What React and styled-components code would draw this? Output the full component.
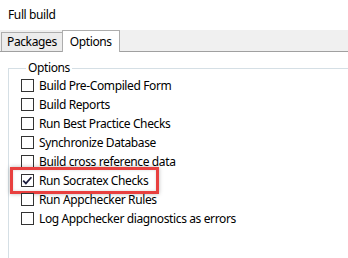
import React from "react";
import styled, { createGlobalStyle } from "styled-components";

const Global = createGlobalStyle`
  html, body { margin: 0; padding: 0; background: #ffffff; }
  body {
    width: 348px; height: 258px; overflow: hidden;
    font-family: "Noto Sans", "Open Sans", sans-serif;
    font-size: 12px; letter-spacing: -0.38px; color: #000;
  }
`;

const Window = styled.div`
  width: 348px;
  height: 258px;
  display: flex;
  flex-direction: column;
  overflow: hidden;
`;

const Title = styled.div`
  padding: 7px 0 0 8px;
  height: 30px;
  flex: none;
  box-sizing: border-box;
  line-height: 16px;
  color: #000;
`;

const TabStrip = styled.div`
  display: flex;
  align-items: flex-end;
  flex: none;
  height: 22px;
  box-sizing: border-box;
  padding-left: 1px;
  background: #f0f0f0;
  border-bottom: 1px solid #a0a0a0;
`;

const Tab = styled.div`
  box-sizing: border-box;
  height: ${(p) => (p.$active ? "22px" : "19px")};
  margin-bottom: ${(p) => (p.$active ? "-1px" : "0")};
  margin-left: ${(p) => (p.$active ? "-1px" : "0")};
  padding: 0 ${(p) => (p.$active ? "7px" : "5px")};
  display: flex;
  align-items: center;
  border: 1px solid #adadad;
  border-bottom: none;
  background: ${(p) => (p.$active ? "#ffffff" : "#ececec")};
  position: relative;
  z-index: ${(p) => (p.$active ? 1 : 0)};
  line-height: 16px;
`;

const Body = styled.div`
  flex: 1;
  min-height: 0;
  overflow: hidden;
  padding: 8px 0 0 8px;
`;

const Group = styled.fieldset`
  margin: 0;
  padding: 0 0 0 12px;
  border: 1px solid #d5dfe5;
  border-right: none;
  border-bottom: none;
  height: 220px;
  min-width: 0;
  display: flex;
  flex-direction: column;
  align-items: flex-start;
`;

const Legend = styled.legend`
  padding: 0 2px;
  margin-left: 5px;
  line-height: 16px;
`;

const Row = styled.label`
  position: relative;
  display: inline-flex;
  align-items: center;
  gap: 5px;
  height: 19px;
  line-height: 16px;
  white-space: nowrap;

  ${(p) =>
    p.$highlight &&
    `
    &::before {
      content: "";
      position: absolute;
      left: -11px;
      right: -11px;
      top: -4px;
      bottom: -4px;
      border: 3px solid #e8403f;
      box-shadow: 0 0 4px rgba(0,0,0,0.28), inset 0 0 3px rgba(0,0,0,0.15);
      pointer-events: none;
    }
  `}
`;

const Box = styled.span`
  width: 13px;
  height: 13px;
  box-sizing: border-box;
  border: 1px solid #333333;
  background: #ffffff;
  display: flex;
  align-items: center;
  justify-content: center;
  flex: none;
`;

const options = [
  ["Build Pre-Compiled Form", false],
  ["Build Reports", false],
  ["Run Best Practice Checks", false],
  ["Synchronize Database", false],
  ["Build cross reference data", false],
  ["Run Socratex Checks", true],
  ["Run Appchecker Rules", false],
  ["Log Appchecker diagnostics as errors", false],
];

function Check() {
  return (
    <svg width="11" height="11" viewBox="0 0 11 11">
      <path d="M1.2 5.6 L3.9 8.4 L9.4 2.2" fill="none" stroke="#1c1c3c" strokeWidth="1.7" />
    </svg>
  );
}

export default function App() {
  return (
    <Window>
      <Global />
      <Title>Full build</Title>
      <TabStrip>
        <Tab>Packages</Tab>
        <Tab $active>Options</Tab>
      </TabStrip>
      <Body>
        <Group>
          <Legend>Options</Legend>
          {options.map(([label, checked]) => (
            <Row key={label} $highlight={checked}>
              <Box>{checked && <Check />}</Box>
              {label}
            </Row>
          ))}
        </Group>
      </Body>
    </Window>
  );
}
